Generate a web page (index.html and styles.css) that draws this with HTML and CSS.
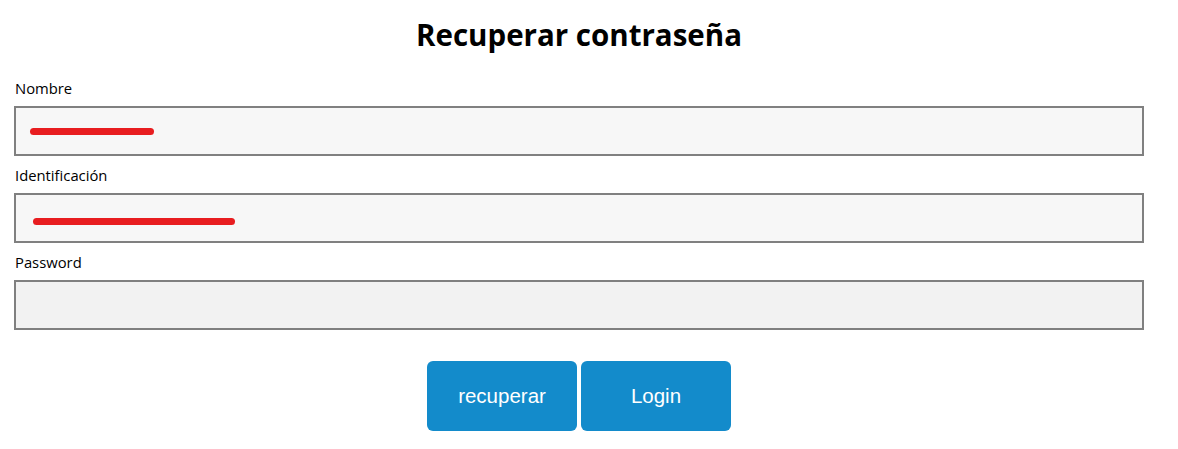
FILE: index.html
```html
<!DOCTYPE html>
<html lang="es">
<head>
<meta charset="utf-8">
<title>Recuperar contraseña</title>
<link rel="stylesheet" href="styles.css">
</head>
<body>
<main class="page">
  <h1 class="title">Recuperar contraseña</h1>
  <form class="form">
    <div class="field">
      <label class="label" for="nombre">Nombre</label>
      <div class="control">
        <input class="input" id="nombre" type="text">
        <span class="redact redact-name"></span>
      </div>
    </div>
    <div class="field">
      <label class="label" for="ident">Identificación</label>
      <div class="control">
        <input class="input" id="ident" type="text">
        <span class="redact redact-id"></span>
      </div>
    </div>
    <div class="field">
      <label class="label" for="pass">Password</label>
      <div class="control">
        <input class="input input-pass" id="pass" type="password">
      </div>
    </div>
    <div class="actions">
      <button class="btn" type="button">recuperar</button>
      <button class="btn" type="button">Login</button>
    </div>
  </form>
</main>
</body>
</html>
```

FILE: styles.css
```css
* { box-sizing: border-box; }

html, body {
  margin: 0;
  padding: 0;
  background: #ffffff;
}

body {
  font-family: "Open Sans", "Noto Sans", sans-serif;
  color: #000000;
}

.page {
  width: 1130px;
  margin-left: 14px;
  padding-top: 15px;
}

.title {
  margin: 0;
  text-align: center;
  font-size: 29.5px;
  line-height: 40px;
  font-weight: 700;
}

.form {
  margin-top: 23px;
  display: flex;
  flex-direction: column;
  gap: 9px;
}

.field {
  display: flex;
  flex-direction: column;
}

.label {
  display: block;
  padding-left: 1px;
  font-size: 14.8px;
  line-height: 20px;
  margin-bottom: 8px;
}

.control {
  position: relative;
}

.input {
  display: block;
  width: 100%;
  height: 50px;
  margin: 0;
  border: 2px solid #808080;
  border-radius: 0;
  background: #f7f7f7;
  font: inherit;
  outline: none;
}

.input-pass {
  background: #f2f2f2;
}

.redact {
  position: absolute;
  height: 7px;
  border-radius: 4px;
  background: #e81d20;
}

.redact-name {
  left: 16px;
  top: 22px;
  width: 124px;
}

.redact-id {
  left: 19px;
  top: 25px;
  width: 202px;
}

.actions {
  margin-top: 22px;
  display: flex;
  justify-content: center;
  gap: 4px;
}

.btn {
  width: 150px;
  height: 70px;
  border: none;
  border-radius: 6px;
  background: #138bcb;
  color: #ffffff;
  font-family: "Liberation Sans", Arial, sans-serif;
  font-size: 20.5px;
  padding: 0;
  cursor: pointer;
}
```
